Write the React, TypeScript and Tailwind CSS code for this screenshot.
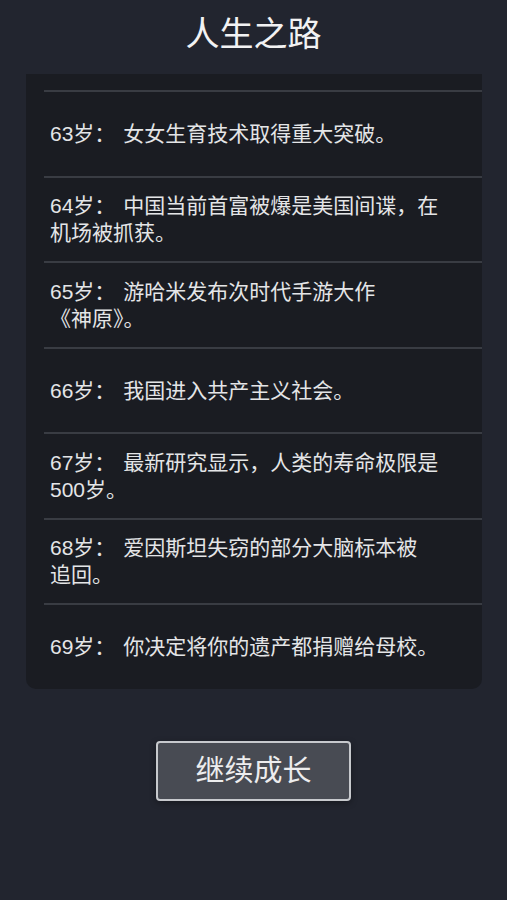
import React from 'react'

const FONT = '"Liberation Sans", "Noto Sans CJK SC", sans-serif'

interface Entry {
    age: number;
    lines: string[];
}

const entries: Entry[] = [
    { age: 63, lines: ['女女生育技术取得重大突破。'] },
    { age: 64, lines: ['中国当前首富被爆是美国间谍，在', '机场被抓获。'] },
    { age: 65, lines: ['游哈米发布次时代手游大作', '《神原》。'] },
    { age: 66, lines: ['我国进入共产主义社会。'] },
    { age: 67, lines: ['最新研究显示，人类的寿命极限是', '500岁。'] },
    { age: 68, lines: ['爱因斯坦失窃的部分大脑标本被', '追回。'] },
    { age: 69, lines: ['你决定将你的遗产都捐赠给母校。'] },
]

const EventRow = ({ age, lines }: Entry) => (
    <div className="h-[85.5px] border-t-2 border-[#393c43] flex items-center pl-[6px]">
        <p className="whitespace-nowrap text-[21px] leading-[27px] text-[#e4e5e7]">
            {age}岁：<span className="inline-block w-[8px]" />{lines[0]}
            {lines.slice(1).map((l) => (
                <React.Fragment key={l}>
                    <br />
                    {l}
                </React.Fragment>
            ))}
        </p>
    </div>
)

export default function App() {
    return (
        <div className="min-h-screen w-full bg-[#22252f] flex flex-col" style={{ fontFamily: FONT }}>

            {/* Title */}
            <header className="h-[74px] pb-[6px] flex items-center justify-center">
                <h1 className="text-[34px] leading-none font-normal text-[#f2f2f3]">人生之路</h1>
            </header>

            {/* Event log panel */}
            <div className="ml-[26px] w-[456px] h-[615px] pt-[16px] bg-[#1a1c22] rounded-b-[10px] overflow-hidden">
                <div className="ml-[18px]">
                    {entries.map((e) => (
                        <EventRow key={e.age} {...e} />
                    ))}
                </div>
            </div>

            {/* Continue button */}
            <div className="mt-[52px] flex justify-center">
                <button className="w-[195px] h-[60px] border-2 border-[#c7c9cd] rounded-[4px] bg-[#484b53] text-[29px] leading-none text-[#ededee] shadow-[0_2px_6px_rgba(0,0,0,0.35)]">
                    继续成长
                </button>
            </div>
        </div>
    )
}
